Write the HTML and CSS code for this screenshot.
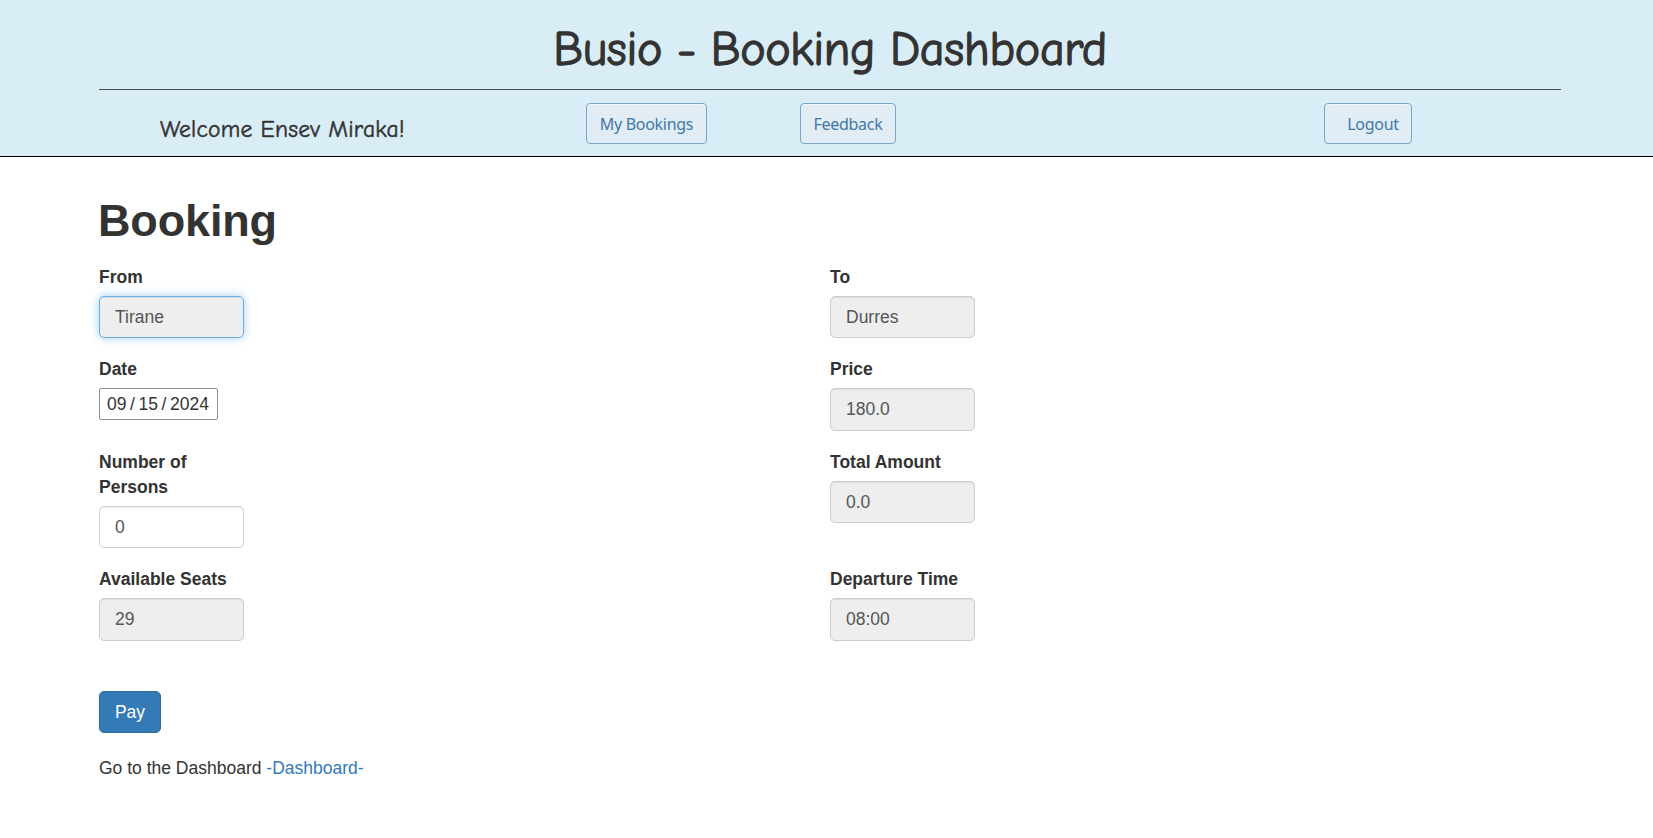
FILE: index.html
```html
<!DOCTYPE html>
<html lang="en">
<head>
<meta charset="utf-8">
<title>Busio - Booking Dashboard</title>
<link rel="stylesheet" href="styles.css">
</head>
<body>
<header class="header">
  <h1 class="brand"><span>Busio - Booking Dashboard</span></h1>
  <nav class="nav">
    <div class="welcome"><span>Welcome Ensev Miraka!</span></div>
    <a class="nav-btn bookings"><span>My Bookings</span></a>
    <a class="nav-btn feedback"><span>Feedback</span></a>
    <a class="nav-btn logout"><span>Logout</span></a>
  </nav>
</header>
<main class="container">
  <h1 class="heading">Booking</h1>
  <form class="form">
    <div class="group"><label class="label">From</label><div class="control readonly focused">Tirane</div></div>
    <div class="group"><label class="label">To</label><div class="control readonly">Durres</div></div>
    <div class="group"><label class="label">Date</label><div class="date"><span>09</span><span>/</span><span>15</span><span>/</span><span>2024</span></div></div>
    <div class="group"><label class="label">Price</label><div class="control readonly">180.0</div></div>
    <div class="group"><label class="label">Number of Persons</label><div class="control">0</div></div>
    <div class="group"><label class="label">Total Amount</label><div class="control readonly">0.0</div></div>
    <div class="group"><label class="label">Available Seats</label><div class="control readonly">29</div></div>
    <div class="group"><label class="label">Departure Time</label><div class="control readonly">08:00</div></div>
  </form>
  <button class="pay" type="button">Pay</button>
  <p class="back">Go to the Dashboard <a class="link">-Dashboard-</a></p>
</main>
</body>
</html>
```
FILE: styles.css
```css
* { box-sizing: border-box; }
body {
  margin: 0;
  background: #fff;
  color: #333;
  font: 17.5px/25px "Liberation Sans", Arial, sans-serif;
}
.header {
  height: 157px;
  padding: 0 92px 0 99px;
  background: #d9edf7;
  border-bottom: 1px solid #000;
}
.brand {
  height: 90px;
  margin: 0;
  padding-top: 22px;
  border-bottom: 1px solid #444d51;
  font: 400 48px/56px "Comic Sans MS", "Comic Neue", Lato, sans-serif;
  letter-spacing: -0.3px;
  word-spacing: -1px;
  -webkit-text-stroke: 1.3px #333;
  text-align: center;
  white-space: nowrap;
}
.nav {
  display: flex;
  align-items: flex-start;
  padding-top: 13px;
}
.welcome {
  width: 426px;
  margin: 12px 0 0 61px;
  font: 400 23.5px/30px "Comic Sans MS", "Comic Neue", Lato, sans-serif;
  letter-spacing: 0.25px;
  -webkit-text-stroke: 0.5px #333;
  white-space: nowrap;
}
.nav-btn {
  height: 41px;
  padding-top: 8px;
  border: 1px solid #7aa6cb;
  border-radius: 4px;
  background: #e1ecf4;
  box-shadow: inset 0 1px 1px #f4f8fb;
  color: #3f79a8;
  font: 16px/24px "Segoe UI", "Noto Sans", sans-serif;
  letter-spacing: -0.3px;
  text-align: center;
  white-space: nowrap;
}
.bookings { width: 121px; }
.feedback { width: 96px; margin-left: 93px; }
.logout { width: 88px; margin-left: 428px; padding-left: 10px; }
.container { padding: 39px 92px 0 99px; }
.heading {
  margin: 0 0 19px -1px;
  font-size: 45px;
  line-height: 49.5px;
  font-weight: 700;
  letter-spacing: -0.15px;
}
.form {
  display: grid;
  grid-template-columns: 731px 145px;
  row-gap: 18.75px;
}
.group { width: 145px; }
.label {
  display: block;
  margin-bottom: 6.25px;
  font-weight: 700;
}
.control {
  height: 42.5px;
  padding: 7.9px 15px 0;
  border: 1px solid #ccc;
  border-radius: 5px;
  box-shadow: inset 0 1px 1px rgba(0, 0, 0, 0.075);
  color: #555;
}
.readonly { background: #eee; }
.focused {
  border-color: #66afe9;
  box-shadow: inset 0 1px 1px rgba(0, 0, 0, 0.075), 0 0 10px rgba(102, 175, 233, 0.6);
}
.date {
  display: flex;
  gap: 3.6px;
  width: 119px;
  height: 32px;
  padding: 3px 7px;
  border: 1px solid #8f8f9d;
  border-radius: 2px;
}
.pay {
  display: block;
  width: 62px;
  height: 42.5px;
  margin-top: 49.75px;
  padding: 1px 0 0;
  border: 1px solid #2e6da4;
  border-radius: 5px;
  background: #337ab7;
  color: #fff;
  font: inherit;
}
.back { margin: 22.5px 0 0; }
.link { color: #337ab7; }
```
